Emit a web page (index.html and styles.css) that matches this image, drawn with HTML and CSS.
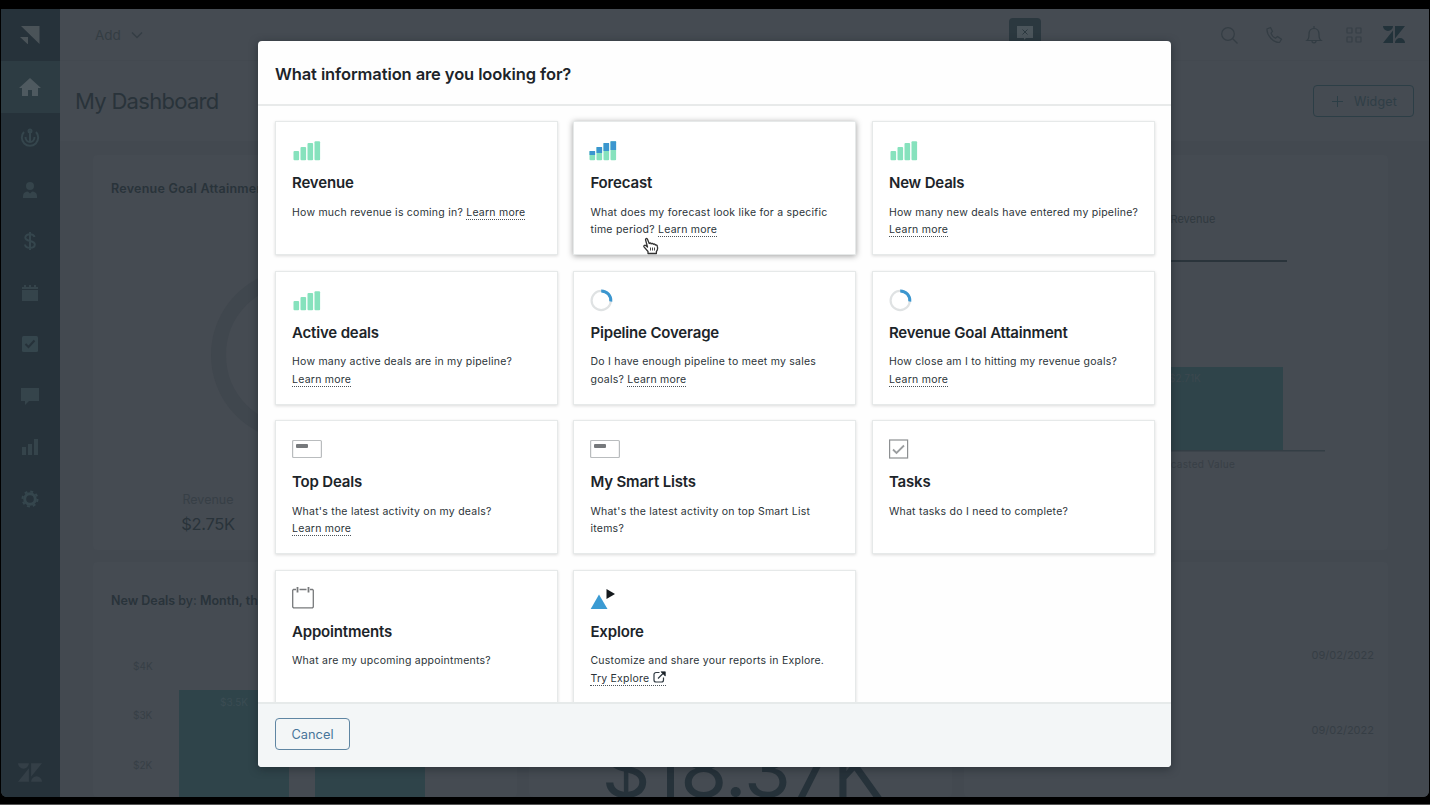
FILE: index.html
```html
<!DOCTYPE html>
<html lang="en">

<head>
    <meta charset="UTF-8">
    <meta name="viewport" content="width=device-width, initial-scale=1.0">
    <title>My Dashboard</title>
    <link rel="stylesheet" href="styles.css">
</head>

<body>
    <svg class="defs" width="0" height="0">
        <symbol id="icon-bars" viewBox="0 0 30 24">
            <rect x="1.5" y="12" width="5.6" height="9.3" rx="1" />
            <rect x="8.5" y="8" width="5.6" height="13.3" rx="1" />
            <rect x="15.5" y="4" width="5.6" height="17.3" rx="1" />
            <rect x="22.5" y="2.2" width="5.6" height="19.1" rx="1" />
        </symbol>
        <symbol id="icon-ring" viewBox="0 0 30 24">
            <circle cx="11.2" cy="11.5" r="9.6" fill="none" stroke="#dfe2e3" stroke-width="2.2" />
            <path d="M11.2 1.9a9.6 9.6 0 0 1 9.6 10.6" fill="none" stroke="#3b96cf" stroke-width="3" />
        </symbol>
        <symbol id="icon-list" viewBox="0 0 30 24">
            <rect x="0.6" y="2.500" width="28.8" height="17" rx="1" fill="#fff" stroke="#b9bcbe" stroke-width="1.2" />
            <rect x="4" y="6" width="12" height="4" rx="1" fill="#76797c" />
        </symbol>
        <symbol id="icon-zendesk" viewBox="0 0 22 17">
            <path d="M0 0h10a5 5 0 0 1-10 0zM10 4.5V17H0zM12 17a5 5 0 0 1 10 0zM12 12.500V0h10z" />
        </symbol>
    </svg>

    <div class="screen">
        <div class="app">
            <nav class="sidebar">
                <div class="brand">
                    <svg width="20" height="18" viewBox="0 0 20 18">
                        <path d="M1 0h18.500v18zM0 11h8v7.500z" fill="#4a5358" />
                    </svg>
                </div>
                <a class="nav-item active">
                    <svg width="22" height="20" viewBox="0 0 22 20">
                        <path d="M11 1 0 11h3v8h6v-6h4v6h6v-8h3z" fill="#4f5a60" />
                    </svg>
                </a>
                <a class="nav-item">
                    <svg width="20" height="20" viewBox="0 0 20 20" fill="none" stroke="#35464d" stroke-width="2">
                        <path d="M4 4a8.200 8.200 0 1 0 12 0M10 3v11M5.500 9a4.500 5 0 0 0 9 0" />
                        <circle cx="10" cy="3" r="1.500" />
                    </svg>
                </a>
                <a class="nav-item">
                    <svg width="16" height="18" viewBox="0 0 16 18" fill="#35444b">
                        <circle cx="8" cy="5" r="4" />
                        <path d="M1 17v-2c0-3 2-4.500 5-4.500l2 2 2-2c3 0 5 1.500 5 4.500v2z" />
                    </svg>
                </a>
                <a class="nav-item">
                    <svg width="14" height="20" viewBox="0 0 14 20" fill="none" stroke="#35464d" stroke-width="2">
                        <path d="M11.500 6C11 4 9.500 3.200 7 3.200S2.300 4.400 2.300 6.500c0 4.500 9.500 2.500 9.500 7 0 2.200-2 3.300-4.800 3.300S2.200 15.800 2 13.500M7 1v18" />
                    </svg>
                </a>
                <a class="nav-item">
                    <svg width="16" height="16" viewBox="0 0 16 16" fill="#35444b">
                        <path d="M0 5h16v11H0zM0 4V2h2V0h2v2h3V0h2v2h3V0h2v2h2v2z" />
                    </svg>
                </a>
                <a class="nav-item">
                    <svg width="16" height="16" viewBox="0 0 16 16">
                        <rect width="16" height="16" rx="1.500" fill="#35464d" />
                        <path d="m3.500 8 3 3 6-6.500" fill="none" stroke="#26323a" stroke-width="2" />
                    </svg>
                </a>
                <a class="nav-item">
                    <svg width="18" height="18" viewBox="0 0 18 18">
                        <path d="M0 1h18v13H8l-4 4v-4H0z" fill="#35444b" />
                    </svg>
                </a>
                <a class="nav-item">
                    <svg width="16" height="16" viewBox="0 0 16 16" fill="#35444b">
                        <path d="M0 8h4v8H0zM6 5h4v11H6zM12 0h4v16h-4z" />
                    </svg>
                </a>
                <a class="nav-item">
                    <svg width="18" height="18" viewBox="0 0 18 18" fill="none" stroke="#35464d">
                        <circle cx="9" cy="9" r="5.300" stroke-width="3" />
                        <circle cx="9" cy="9" r="7.500" stroke-width="2" stroke-dasharray="2.950 2.940" />
                    </svg>
                </a>
                <svg class="sidebar-logo" width="24" height="19" fill="#343f47"><use href="#icon-zendesk" /></svg>
            </nav>

            <main class="main">
                <header class="topbar">
                    <span class="add">Add</span>
                    <svg class="chevron" width="12" height="8" viewBox="0 0 12 8" fill="none" stroke="#343d44" stroke-width="1.300">
                        <path d="m1 1.500 5 5 5-5" />
                    </svg>
                    <div class="chat">
                        <svg width="16" height="14" viewBox="0 0 16 14">
                            <path d="M0 0h16v12H9l-2 2v-2H0z" fill="#4b555b" />
                            <path d="m5.500 3.500 5 5m0-5-5 5" stroke="#2b383f" />
                        </svg>
                    </div>
                    <div class="tools">
                        <svg class="search" width="18" height="18" viewBox="0 0 18 18" fill="none" stroke="#343d44" stroke-width="1.200">
                            <circle cx="8" cy="8" r="6.300" />
                            <path d="m12.500 12.500 5 5" />
                        </svg>
                        <svg width="18" height="18" viewBox="0 0 18 18" fill="none" stroke="#343d44" stroke-width="1.200">
                            <path d="M5.500 1.500 2 3C1.500 9 8 16.500 14.500 16.500l2-3.300-4-2.700-2 1.800C8.500 11.500 6.500 9 6 7.200L7.500 5.500z" />
                        </svg>
                        <svg width="18" height="18" viewBox="0 0 18 18" fill="none" stroke="#323c43" stroke-width="1.200">
                            <path d="M2 14.500c2-1.500 2-3 2-6 0-4 2-6 5-6s5 2 5 6c0 3 0 4.500 2 6zM9 0v2.500M7 15c0 2.500 4 2.500 4 0" />
                        </svg>
                        <svg width="18" height="18" viewBox="0 0 18 18" fill="none" stroke="#363f46" stroke-width="1.200">
                            <rect x="2" y="2" width="5" height="5" rx="0.500" />
                            <rect x="11" y="2" width="5" height="5" rx="0.500" />
                            <rect x="2" y="11" width="5" height="5" rx="0.500" />
                            <rect x="11" y="11" width="5" height="5" rx="0.500" />
                        </svg>
                        <svg class="zendesk" width="22" height="17" fill="#22323a"><use href="#icon-zendesk" /></svg>
                    </div>
                </header>

                <div class="page-head">
                    <h1>My Dashboard</h1>
                    <button class="widget-btn"><span class="plus"></span>Widget</button>
                </div>

                <div class="widgets row-top">
                    <section class="widget">
                        <h3>Revenue Goal Attainment</h3>
                        <svg class="gauge" width="174" height="174" viewBox="0 0 174 174">
                            <circle cx="87" cy="87" r="78.500" fill="none" stroke="#40474e" stroke-width="15" />
                        </svg>
                        <div class="stat">
                            <span>Revenue</span>
                            <strong>$2.75K</strong>
                        </div>
                    </section>
                    <section class="widget">
                        <div class="legend">Revenue</div>
                        <svg class="plot" width="641" height="210" viewBox="0 0 641 210">
                            <rect x="340" y="15" width="200" height="2" fill="#2a343b" />
                            <rect x="340" y="122" width="196" height="84" fill="#2f444a" />
                            <rect x="340" y="205" width="238" height="1.500" fill="#343e45" />
                            <text x="422" y="137" class="bar-value">$2.71K</text>
                        </svg>
                        <div class="axis-name">Forecasted Value</div>
                    </section>
                </div>

                <div class="widgets row-bottom">
                    <section class="widget">
                        <h3>New Deals <span>by:</span> Month, this year</h3>
                        <div class="bar-chart">
                            <ul class="ticks">
                                <li>$4K</li>
                                <li>$3K</li>
                                <li>$2K</li>
                            </ul>
                            <div class="bar bar-tall">$3.5K</div>
                            <div class="bar bar-short"></div>
                        </div>
                    </section>
                    <section class="widget big-number">$18.37K</section>
                    <section class="widget dates">
                        <time>09/02/2022</time>
                        <time>09/02/2022</time>
                    </section>
                </div>
            </main>
        </div>
    </div>

    <div class="modal">
        <div class="modal-header">
            <h2>What information are you looking for?</h2>
        </div>
        <div class="modal-body">
            <div class="card">
                <svg class="icon" width="30" height="24" fill="#86e2bd"><use href="#icon-bars" /></svg>
                <h4>Revenue</h4>
                <p>How much revenue is coming in? <a>Learn more</a></p>
            </div>
            <div class="card hovered">
                <svg class="icon forecast-icon" width="30" height="24" viewBox="0 0 30 24" fill="#86e2bd">
                    <use href="#icon-bars" width="30" height="24" />
                    <path d="M1.500 12h5.600v4H1.500zM8.500 8h5.600v6H8.500zM15.500 4h5.600v8h-5.600zM22.500 2.200h5.600V11h-5.600z" fill="#3b96cf" />
                </svg>
                <h4>Forecast</h4>
                <p>What does my forecast look like for a specific time period? <a>Learn more</a></p>
                <svg class="pointer" width="16" height="18" viewBox="0 0 16 18" fill="#fff" stroke="#333" stroke-width="1.300" stroke-linejoin="round">
                    <path d="M5 16.500v-2L1 9.800c-.6-1.200.8-2 1.800-1.200L4.500 10 2.600 3C2.300 1.500 4 .9 4.500 2.200l1.700 4.300c.6-.8 1.800-.6 2 .3.700-.8 1.900-.5 2.100.5.800-.6 1.900-.3 2.100.7.900-.3 1.700.3 1.900 1.200.7 2.400.2 4-.9 5.300v2z" />
                    <path d="M7.500 10.500v3M9.500 10.500v3M11.500 10.500v3" stroke-width=".9" />
                </svg>
            </div>
            <div class="card">
                <svg class="icon" width="30" height="24" fill="#86e2bd"><use href="#icon-bars" /></svg>
                <h4>New Deals</h4>
                <p>How many new deals have entered my pipeline? <a>Learn more</a></p>
            </div>
            <div class="card">
                <svg class="icon" width="30" height="24" fill="#86e2bd"><use href="#icon-bars" /></svg>
                <h4>Active deals</h4>
                <p>How many active deals are in my pipeline? <a>Learn more</a></p>
            </div>
            <div class="card">
                <svg class="icon" width="30" height="24"><use href="#icon-ring" /></svg>
                <h4>Pipeline Coverage</h4>
                <p>Do I have enough pipeline to meet my sales goals? <a>Learn more</a></p>
            </div>
            <div class="card">
                <svg class="icon" width="30" height="24"><use href="#icon-ring" /></svg>
                <h4>Revenue Goal Attainment</h4>
                <p>How close am I to hitting my revenue goals? <a>Learn more</a></p>
            </div>
            <div class="card">
                <svg class="icon" width="30" height="24"><use href="#icon-list" /></svg>
                <h4>Top Deals</h4>
                <p>What's the latest activity on my deals? <a>Learn more</a></p>
            </div>
            <div class="card">
                <svg class="icon" width="30" height="24"><use href="#icon-list" /></svg>
                <h4>My Smart Lists</h4>
                <p>What's the latest activity on top Smart List items?</p>
            </div>
            <div class="card">
                <svg class="icon" width="30" height="24" viewBox="0 0 30 24" fill="none">
                    <rect x="0.600" y="2" width="18" height="18" stroke="#8d9092" stroke-width="1.200" />
                    <path d="m4 11.500 3.500 3.500L15 7.500" stroke="#9a9d9f" stroke-width="1.800" />
                </svg>
                <h4>Tasks</h4>
                <p>What tasks do I need to complete?</p>
            </div>
            <div class="card">
                <svg class="icon" width="30" height="24" viewBox="0 0 30 24" fill="none" stroke="#77797b" stroke-width="1.300">
                    <path d="M4 1.500H1.500l-.8.800V19l.8.800h19l.8-.8V2.300l-.8-.8H18M7.500 1.500h7" />
                    <path d="M5.500-1v5.500M16.500-1v5.500" stroke-width="1.800" />
                </svg>
                <h4>Appointments</h4>
                <p>What are my upcoming appointments?</p>
            </div>
            <div class="card">
                <svg class="icon" width="30" height="24" viewBox="0 0 30 24">
                    <path d="M9 6.500 17.500 21H.7z" fill="#3b9bd3" />
                    <path d="M16.500 1v10l8.500-5z" fill="#14191d" />
                </svg>
                <h4>Explore</h4>
                <p>Customize and share your reports in Explore. <a>Try Explore <svg class="external" width="13" height="12" viewBox="0 0 13 12" fill="none" stroke="#2f3941" stroke-width="1.200">
                            <path d="M6.500 1.500H3a2 2 0 0 0-2 2V9a2 2 0 0 0 2 2h5.500a2 2 0 0 0 2-2V6.500M5 7.500l5.500-5.500" />
                            <path d="M8 .8h4.300v4.300z" fill="#14191d" stroke-width=".8" />
                        </svg></a></p>
            </div>
        </div>
        <div class="modal-footer">
            <button class="cancel-btn">Cancel</button>
        </div>
    </div>
</body>

</html>
```
FILE: styles.css
```css
* {
    box-sizing: border-box;
}

body {
    margin: 0;
    height: 809px;
    overflow: hidden;
    background: #fff;
    font-family: Inter, "Liberation Sans", sans-serif;
    color: #1c2429;
}

h1, h2, h3, h4, p, ul {
    margin: 0;
    padding: 0;
}

button {
    font-family: inherit;
    background: none;
}

.defs {
    position: absolute;
}

.screen {
    height: 805px;
    padding: 9px 1px 7px;
    background: #000;
    border-bottom: 1px solid #555;
}

.app {
    display: flex;
    height: 788px;
    background: #454b52;
    border-radius: 0 0 6px 6px;
    overflow: hidden;
}

/* sidebar */
.sidebar {
    display: flex;
    flex-direction: column;
    width: 59px;
    background: #26323a;
}

.brand {
    display: flex;
    align-items: center;
    justify-content: center;
    height: 52px;
    padding-right: 1px;
}

.nav-item {
    display: flex;
    align-items: center;
    justify-content: center;
    height: 51.5px;
    padding-right: 1px;
}

.nav-item.active {
    background: #2d3c43;
}

.sidebar-logo {
    margin: auto auto 15px 17px;
}

/* dashboard */
.main {
    display: flex;
    flex-direction: column;
    flex: 1;
    min-width: 0;
}

.topbar {
    display: flex;
    flex: none;
    align-items: center;
    height: 52px;
    padding: 0 24px 0 35px;
    border-bottom: 1px solid #434950;
}

.add {
    font-size: 13.5px;
    color: #343d43;
}

.chevron {
    margin-left: 10px;
}

.chat {
    align-self: flex-end;
    display: flex;
    justify-content: center;
    width: 32px;
    height: 42px;
    margin-left: 866px;
    padding-top: 8px;
    border-radius: 4px 4px 0 0;
    background: #2b383f;
}

.tools {
    display: flex;
    align-items: center;
    gap: 22px;
    margin-left: auto;
}

.tools .search {
    margin-right: 5px;
}

.tools .zendesk {
    margin-left: -2px;
}

.page-head {
    display: flex;
    flex: none;
    align-items: center;
    justify-content: space-between;
    height: 80px;
    padding: 0 15px 0 15px;
}

h1 {
    font-size: 22px;
    font-weight: 400;
    letter-spacing: -0.7px;
    color: #29333a;
}

.widget-btn {
    display: flex;
    align-items: center;
    justify-content: center;
    gap: 11px;
    width: 101px;
    height: 32px;
    padding: 0 4px 0 6px;
    border: 1px solid #2c3e46;
    border-radius: 4px;
    font-size: 12.5px;
    letter-spacing: 0.2px;
    color: #2f3e46;
}

.plus {
    width: 11px;
    height: 11px;
    background: linear-gradient(#2c3e46, #2c3e46) center / 11px 1px no-repeat, linear-gradient(#2c3e46, #2c3e46) center / 1px 11px no-repeat;
}

.widgets {
    display: grid;
    gap: 12px;
    padding: 0 41px 0 33px;
    background: #434950;
}

.row-top {
    flex: none;
    grid-template-columns: 1fr 1fr;
    height: 421px;
    padding-top: 14px;
    padding-bottom: 12px;
}

.row-bottom {
    flex: 1;
    grid-template-columns: repeat(3, 1fr);
    grid-template-rows: 100%;
    min-height: 0;
}

.widget {
    min-width: 0;
    background: #454b52;
    border-radius: 4px;
    overflow: hidden;
}

h3 {
    padding: 25px 0 0 18px;
    font-size: 12.5px;
    font-weight: 600;
    line-height: 18px;
    letter-spacing: 0.25px;
    white-space: nowrap;
    color: #29333a;
}

h3 span {
    font-weight: 500;
}

.row-bottom h3 {
    padding-top: 30px;
    letter-spacing: 0;
}

.gauge {
    display: block;
    margin: 70px 0 0 117px;
}

.stat {
    width: 90px;
    margin: 49px 0 0 70px;
    text-align: center;
    font-size: 12.5px;
    line-height: 18px;
    color: #373f46;
}

.stat strong {
    display: block;
    margin-top: 2px;
    font-size: 16.5px;
    line-height: 26px;
    font-weight: 400;
    letter-spacing: -0.3px;
    color: #29333a;
}

.legend {
    padding: 57px 0 0 424px;
    font-size: 11px;
    line-height: 14px;
    color: #30393f;
}

.plot {
    display: block;
    margin-top: 19px;
}

.bar-value {
    font-size: 10px;
    fill: #3c484f;
}

.axis-name {
    padding: 2px 0 0 402px;
    font-size: 10px;
    line-height: 14px;
    letter-spacing: 0.3px;
    color: #383f46;
}

.bar-chart {
    display: flex;
    gap: 26px;
    padding-left: 40px;
}

.ticks {
    width: 20px;
    margin-top: 48.5px;
    list-style: none;
    font-size: 10px;
    line-height: 14px;
    white-space: nowrap;
    color: #373f46;
}

.ticks li {
    margin-bottom: 35.5px;
}

.bar {
    width: 110px;
    height: 110px;
    background: #2f444a;
    font-size: 10px;
    text-align: center;
    color: #3b4c53;
}

.bar-tall {
    margin-top: 80px;
    padding-top: 6px;
}

.bar-short {
    margin-top: 130px;
}

.big-number {
    padding: 161px 0 0 4px;
    text-align: center;
    font-size: 76px;
    line-height: 92px;
    letter-spacing: -0.6px;
    white-space: nowrap;
    color: #26323a;
}

.dates {
    display: flex;
    flex-direction: column;
    align-items: flex-end;
    gap: 61px;
    padding: 86px 14px 0 0;
    font-size: 11px;
    line-height: 14px;
    color: #363e45;
}

/* modal */
.modal {
    position: absolute;
    top: 41px;
    left: 258px;
    display: flex;
    flex-direction: column;
    width: 913.4px;
    height: 726px;
    border-radius: 4px;
    background: #fefefe;
    overflow: hidden;
    box-shadow: 0 2px 8px rgba(20, 28, 34, 0.5);
}

.modal-header {
    height: 65px;
    padding: 20px 17px 0;
    border-bottom: 2px solid #e8eaea;
}

h2 {
    font-size: 16.5px;
    line-height: 26px;
    font-weight: 600;
    letter-spacing: -0.1px;
}

.modal-body {
    display: grid;
    grid-template-columns: repeat(3, 1fr);
    grid-auto-rows: 134px;
    gap: 15.5px;
    flex: 1;
    min-height: 0;
    padding: 15.4px 16.5px 0 17px;
    overflow: hidden;
}

.card {
    position: relative;
    padding: 17px 14px 0 16px;
    border: 1px solid #e6e9e9;
    background: #fff;
    box-shadow: 0 1px 3px rgba(0, 0, 0, 0.14);
}

.card.hovered {
    box-shadow: 0 1px 6px rgba(0, 0, 0, 0.38);
}

.icon {
    display: block;
    overflow: visible;
}

.forecast-icon {
    margin-left: -2px;
}

h4 {
    margin: 10px 0 10.5px;
    font-size: 15px;
    line-height: 20px;
    font-weight: 600;
    letter-spacing: -0.17px;
}

.card p {
    font-size: 10.5px;
    line-height: 17.6px;
    letter-spacing: 0.24px;
    color: #2b3338;
}

.card a {
    border-bottom: 1px dotted #4a5258;
    white-space: nowrap;
}

.external {
    vertical-align: -1px;
}

.pointer {
    position: absolute;
    left: 69px;
    top: 115px;
}

.modal-footer {
    height: 65px;
    padding: 14px 17px;
    border-top: 2px solid #e6eaea;
    background: #f3f6f7;
}

.cancel-btn {
    width: 75px;
    height: 32px;
    padding: 1px 0 0;
    border: 1px solid #5f86a3;
    border-radius: 4px;
    font-size: 12.8px;
    color: #47759a;
}
```
